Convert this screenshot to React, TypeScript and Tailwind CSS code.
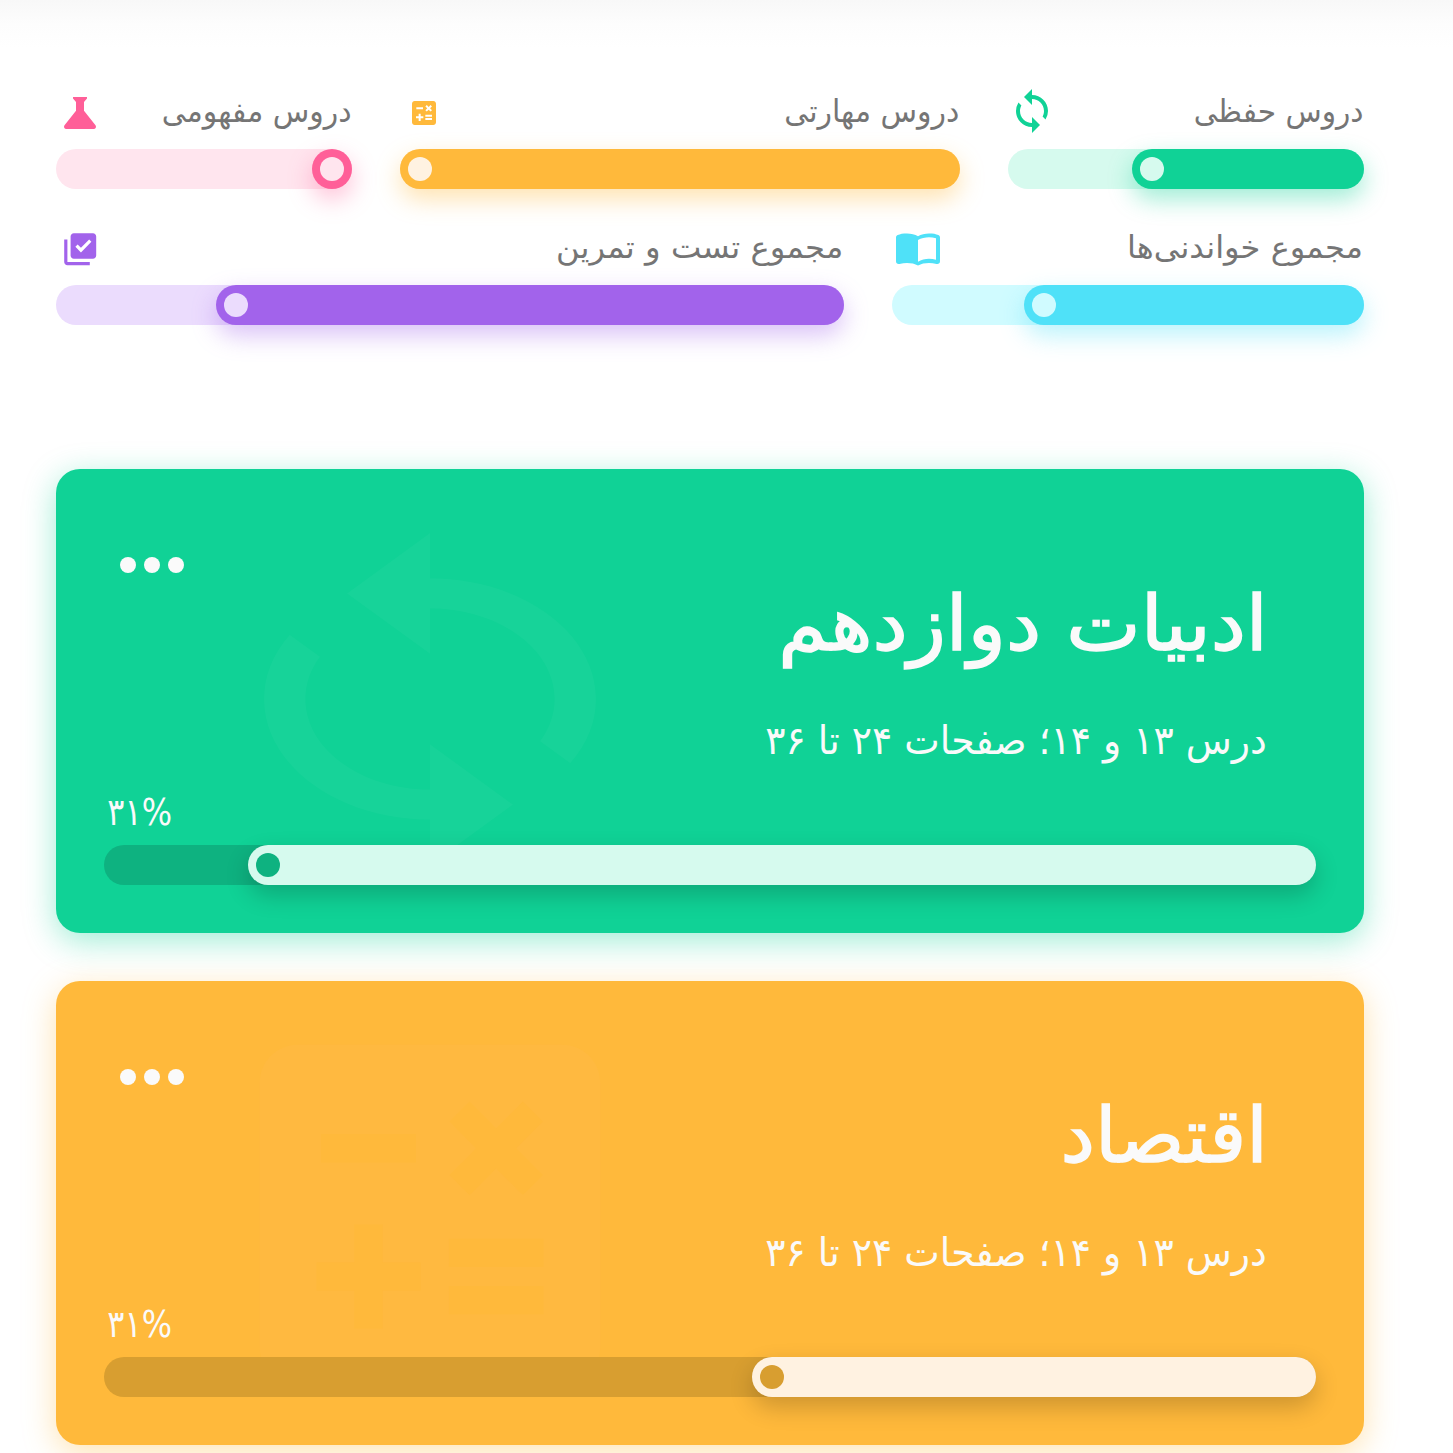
import React from 'react';
import { clsx } from 'clsx';
import { MdCalculate, MdLibraryAddCheck, MdSync } from 'react-icons/md';

interface ProgressBarProps {
  fill: string;
  track: string;
  knob: string;
  width: number;
}

const ProgressBar: React.FC<ProgressBarProps> = ({ fill, track, knob, width }) => (
  <div className={clsx('h-10 rounded-full flex', track)}>
    <div className={clsx('h-10 rounded-full flex items-center justify-end px-2', fill)} style={{ width }}>
      <div className={clsx('size-6 rounded-full shrink-0', knob)} />
    </div>
  </div>
);

const FlaskIcon = () => (
  <svg width="32" height="32" viewBox="0 0 32 32" fill="currentColor">
    <path d="M9 0h14v1.500L20 5v8.700l11.500 14.500c1 1.700.4 3.800-1.600 3.800H2.100c-2 0-2.600-2.100-1.600-3.800L12 13.700V5L9 1.500z" />
  </svg>
);

const BookIcon = () => (
  <svg width="44" height="34" viewBox="0 0 44 34" fill="currentColor">
    <path
      fillRule="evenodd"
      d="M22 3.300C19 1.200 15 .4 11 .4S4 .8 1.600 2.100C.6 2.700 0 3.500 0 4.700v23.500c0 2 1.500 3.200 3.500 2.700 2.500-.7 5-1 7.500-1 4 0 8 .6 11 2.700 3-2.100 7-2.700 11-2.700 2.500 0 5 .3 7.500 1 2 .5 3.500-.7 3.500-2.700V4.700c0-1.200-.6-2-1.600-2.600C40 .8 37 .4 33 .4S25 1.200 22 3.300zM40 26.800c-2.300-.7-4.700-1-7-1-3.700 0-8 1.200-11 3V7c3-1.800 7.300-2.800 11-2.800 2.300 0 4.700.3 7 1z"
    />
  </svg>
);

interface StatProps extends ProgressBarProps {
  label: string;
  labelClass: string;
  icon: React.ReactNode;
  iconClass: string;
  className: string;
}

const Stat: React.FC<StatProps> = ({ label, labelClass, icon, iconClass, className, ...bar }) => (
  <div className={className}>
    <div className="h-12 mb-3.5 flex items-center justify-between">
      <span className={clsx('text-[31px] leading-12 whitespace-nowrap text-[#757575] origin-right', labelClass)}>{label}</span>
      <span className={clsx('h-12 flex items-center justify-center', iconClass)}>{icon}</span>
    </div>
    <ProgressBar {...bar} />
  </div>
);

interface LessonCardProps extends ProgressBarProps {
  title: string;
  titleClass: string;
  className: string;
  backdrop: React.ReactNode;
}

const LessonCard: React.FC<LessonCardProps> = ({ title, titleClass, className, backdrop, ...bar }) => (
  <div className={clsx('relative h-116 rounded-3xl px-12 pb-12 flex flex-col text-[#fafafa]', className)}>
    {backdrop}
    <div className="relative flex justify-between pt-22 pl-4 pr-12">
      <div>
        <h2
          className={clsx(
            'mt-[3px] h-[153px] text-[76px] leading-32 whitespace-nowrap origin-right [-webkit-text-stroke:1.5px_#fafafa]',
            titleClass
          )}
        >
          {title}
        </h2>
        <p className="h-14 pr-px text-[39px] leading-14 whitespace-nowrap origin-right scale-x-[0.967]">
          درس ۱۳ و ۱۴؛ صفحات ۲۴ تا ۳۶
        </p>
      </div>
      <div className="flex gap-2 h-4">
        <span className="size-4 rounded-full bg-[#fafafa]" />
        <span className="size-4 rounded-full bg-[#fafafa]" />
        <span className="size-4 rounded-full bg-[#fafafa]" />
      </div>
    </div>
    <div className="relative mt-auto">
      <div dir="ltr" className="h-12 mb-[9px] pl-1 text-[38px] leading-12 origin-left scale-x-[0.84]">
        ۳۱%
      </div>
      <ProgressBar {...bar} />
    </div>
  </div>
);

export default function App() {
  return (
    <div
      dir="rtl"
      className="h-screen overflow-hidden bg-white font-['DejaVu_Sans',sans-serif]"
    >
      {/* Shadow of the app bar above */}
      <div className="h-12 bg-linear-to-b from-[#f8f8f8] via-[#fdfdfd] to-white" />

      <div className="w-[1308px] mr-[89px] pt-[39px]">
        <div className="flex gap-12">
          <Stat
            label="دروس حفظی"
            labelClass="scale-x-[0.957]"
            icon={<MdSync size={48} />}
            iconClass="w-12 text-[#10d296]"
            className="w-[356px]"
            fill="bg-[#10d296] shadow-[0_10px_24px_#10d29666]"
            track="bg-[#d6faee]"
            knob="bg-[#d6faee]"
            width={232}
          />
          <Stat
            label="دروس مهارتی"
            labelClass="pr-px scale-x-[0.966]"
            icon={<MdCalculate size={32} />}
            iconClass="w-12 pt-1 text-[#ffb93b]"
            className="w-[560px]"
            fill="bg-[#ffb93b] shadow-[0_10px_24px_#ffb93b66]"
            track="bg-[#fff2e1]"
            knob="bg-[#fff2e1]"
            width={560}
          />
          <Stat
            label="دروس مفهومی"
            labelClass="pr-px scale-x-[0.966]"
            icon={<FlaskIcon />}
            iconClass="w-12 pt-1 text-[#ff5f98]"
            className="w-[296px]"
            fill="bg-[#ff5f98] shadow-[0_10px_24px_#ff5f9866]"
            track="bg-[#ffe5ee]"
            knob="bg-[#ffe5ee]"
            width={40}
          />
        </div>
        <div className="flex gap-12 mt-[34px]">
          <Stat
            label="مجموع خواندنی‌ها"
            labelClass="pr-px scale-x-[1.035]"
            icon={<BookIcon />}
            iconClass="w-[52px] pt-1.5 text-[#4fe1f8]"
            className="w-[472px]"
            fill="bg-[#4fe1f8] shadow-[0_10px_24px_#4fe1f866]"
            track="bg-[#d0fbff]"
            knob="bg-[#d0fbff]"
            width={340}
          />
          <Stat
            label="مجموع تست و تمرین"
            labelClass="pr-px scale-x-[1.04]"
            icon={<MdLibraryAddCheck size={38.4} />}
            iconClass="w-12 pt-1 text-[#a263eb]"
            className="w-[788px]"
            fill="bg-[#a263eb] shadow-[0_10px_24px_#a263eb66]"
            track="bg-[#ebdcfd]"
            knob="bg-[#ebdcfd]"
            width={628}
          />
        </div>

        <div className="flex flex-col gap-12 mt-36">
          <LessonCard
            title="ادبیات دوازدهم"
            titleClass="scale-x-[1.04]"
            className="bg-[#10d296] shadow-[0_8px_32px_#10d29666]"
            backdrop={
              <MdSync
                preserveAspectRatio="none"
                className="absolute left-[125px] top-[49px] w-[498px] h-[362px] text-white/3"
              />
            }
            fill="bg-[#d6faee] shadow-[0_10px_24px_rgba(0,0,0,0.2)]"
            track="bg-[#0eb280]"
            knob="bg-[#0eb280]"
            width={1068}
          />
          <LessonCard
            title="اقتصاد"
            titleClass="scale-x-[1.02]"
            className="bg-[#ffb93b] shadow-[0_8px_32px_#ffb93b66]"
            backdrop={<MdCalculate className="absolute left-[147px] top-[7px] size-[454px] text-[#ffb940]" />}
            fill="bg-[#fff2e1] shadow-[0_10px_24px_rgba(0,0,0,0.2)]"
            track="bg-[#d89e30]"
            knob="bg-[#d89e30]"
            width={564}
          />
        </div>
      </div>
    </div>
  );
}
